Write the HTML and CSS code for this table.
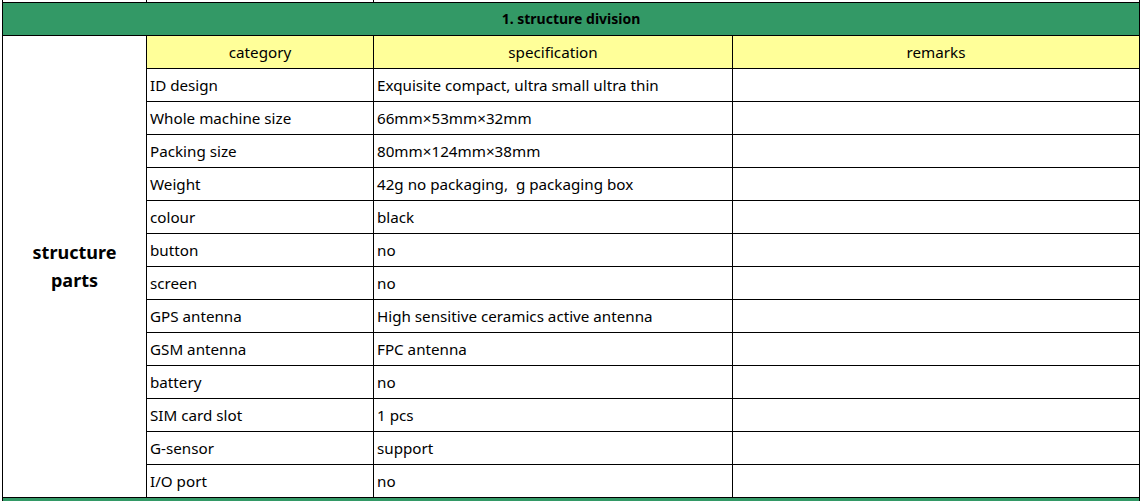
FILE: index.html
```html
<!DOCTYPE html>
<html>
<head>
<meta charset="utf-8">
<link rel="stylesheet" href="styles.css">
</head>
<body>
<table class="sheet">
  <colgroup>
    <col class="c1"><col class="c2"><col class="c3"><col class="c4">
  </colgroup>
  <tr class="stub"><td></td><td></td><td colspan="2"></td></tr>
  <tr class="section"><td colspan="4">1. structure division</td></tr>
  <tr class="head">
    <td class="group" rowspan="14">structure<br>parts</td>
    <td>category</td><td>specification</td><td>remarks</td>
  </tr>
  <tr><td>ID design</td><td>Exquisite compact, ultra small ultra thin</td><td></td></tr>
  <tr><td>Whole machine size</td><td>66mm×53mm×32mm</td><td></td></tr>
  <tr><td>Packing size</td><td>80mm×124mm×38mm</td><td></td></tr>
  <tr><td>Weight</td><td>42g no packaging,&nbsp; g packaging box</td><td></td></tr>
  <tr><td>colour</td><td>black</td><td></td></tr>
  <tr><td>button</td><td>no</td><td></td></tr>
  <tr><td>screen</td><td>no</td><td></td></tr>
  <tr><td>GPS antenna</td><td>High sensitive ceramics active antenna</td><td></td></tr>
  <tr><td>GSM antenna</td><td>FPC antenna</td><td></td></tr>
  <tr><td>battery</td><td>no</td><td></td></tr>
  <tr><td>SIM card slot</td><td>1 pcs</td><td></td></tr>
  <tr><td>G-sensor</td><td>support</td><td></td></tr>
  <tr><td>I/O port</td><td>no</td><td></td></tr>
  <tr class="section next"><td colspan="4"></td></tr>
</table>
</body>
</html>
```
FILE: styles.css
```css
html, body {
  margin: 0;
  padding: 0;
  background: #fff;
  overflow: hidden;
}
.sheet {
  border-collapse: collapse;
  table-layout: fixed;
  margin-left: 2px;
  font-family: "Noto Sans", "Open Sans", sans-serif;
  font-size: 15.2px;
  color: #000;
}
.c1 { width: 144px; }
.c2 { width: 227px; }
.c3 { width: 359px; }
.c4 { width: 407px; }
.sheet td {
  border: 1px solid #000;
  height: 33px;
  padding: 0 0 0 3px;
  box-sizing: border-box;
  white-space: nowrap;
  line-height: 20px;
  vertical-align: middle;
}
.sheet .stub td {
  height: 2px;
  border-top: none;
  padding: 0;
}
.sheet .section td {
  background: #339966;
  font-weight: bold;
  font-size: 14px;
  text-align: center;
  padding: 0;
}
.sheet .next td {
  height: 10px;
  border-bottom: none;
}
.sheet .head td {
  background: #ffff99;
  text-align: center;
  padding: 0;
}
.sheet .head td.group {
  background: #fff;
  font-weight: bold;
  font-size: 18px;
  line-height: 28px;
}
```
